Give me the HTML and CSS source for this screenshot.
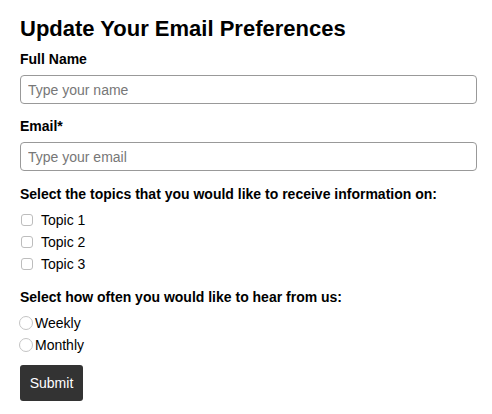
FILE: index.html
```html
<!DOCTYPE html>
<html>
<head>
<meta charset="utf-8">
<link rel="stylesheet" href="styles.css">
</head>
<body>
<form class="prefs">
  <h1 class="title">Update Your Email Preferences</h1>
  <label class="label" for="name">Full Name</label>
  <input class="text-input" id="name" type="text" placeholder="Type your name">
  <label class="label label-email" for="email">Email*</label>
  <input class="text-input" id="email" type="email" placeholder="Type your email">
  <div class="label label-topics">Select the topics that you would like to receive information on:</div>
  <div class="options options-topics">
    <label class="option"><input class="check" type="checkbox"><span>Topic 1</span></label>
    <label class="option"><input class="check" type="checkbox"><span>Topic 2</span></label>
    <label class="option"><input class="check" type="checkbox"><span>Topic 3</span></label>
  </div>
  <div class="label label-freq">Select how often you would like to hear from us:</div>
  <div class="options options-freq">
    <label class="option"><input class="radio" type="radio" name="freq"><span>Weekly</span></label>
    <label class="option"><input class="radio" type="radio" name="freq"><span>Monthly</span></label>
  </div>
  <button class="submit" type="button">Submit</button>
</form>
</body>
</html>
```

FILE: styles.css
```css
html, body {
  margin: 0;
  padding: 0;
  background: #fff;
}
body {
  font-family: "Liberation Sans", Arial, sans-serif;
  color: #000;
  padding: 15px 15px 0 20px;
}
.prefs {
  display: flex;
  flex-direction: column;
  align-items: stretch;
}
.title {
  font-size: 22px;
  line-height: 28px;
  font-weight: bold;
  margin: 0 0 7px 0;
}
.label {
  display: block;
  font-size: 14px;
  line-height: 18px;
  font-weight: bold;
  margin: 0 0 7px 0;
}
.label-email {
  margin-top: 13px;
  margin-bottom: 7px;
}
.label-topics {
  margin-top: 14px;
  margin-bottom: 6px;
}
.label-freq {
  margin-top: 13px;
  margin-bottom: 6px;
}
.text-input {
  box-sizing: border-box;
  height: 29px;
  width: 100%;
  margin: 0;
  padding: 0 7px;
  border: 1px solid #999;
  border-radius: 4px;
  font-family: "Liberation Sans", Arial, sans-serif;
  font-size: 14px;
  color: #000;
  background: #fff;
  outline: none;
}
.text-input::placeholder {
  color: #777;
}
.options {
  display: flex;
  flex-direction: column;
}
.option {
  display: flex;
  align-items: center;
  height: 22px;
  font-size: 14px;
  line-height: 22px;
}
.check {
  appearance: none;
  -webkit-appearance: none;
  box-sizing: border-box;
  width: 12px;
  height: 12px;
  margin: 0 8px 0 1px;
  border: 1px solid #bdbdbd;
  border-radius: 3px;
  background: #fff;
}
.radio {
  appearance: none;
  -webkit-appearance: none;
  box-sizing: border-box;
  width: 14px;
  height: 14px;
  margin: 0 2px 0 -1px;
  border: 1px solid #c4c4c4;
  border-radius: 50%;
  background: #fff;
}
.submit {
  align-self: flex-start;
  margin-top: 9px;
  width: 63px;
  height: 36px;
  padding: 0;
  border: none;
  border-radius: 3px;
  background: #333;
  color: #fff;
  font-family: "Liberation Sans", Arial, sans-serif;
  font-size: 14px;
}
```
